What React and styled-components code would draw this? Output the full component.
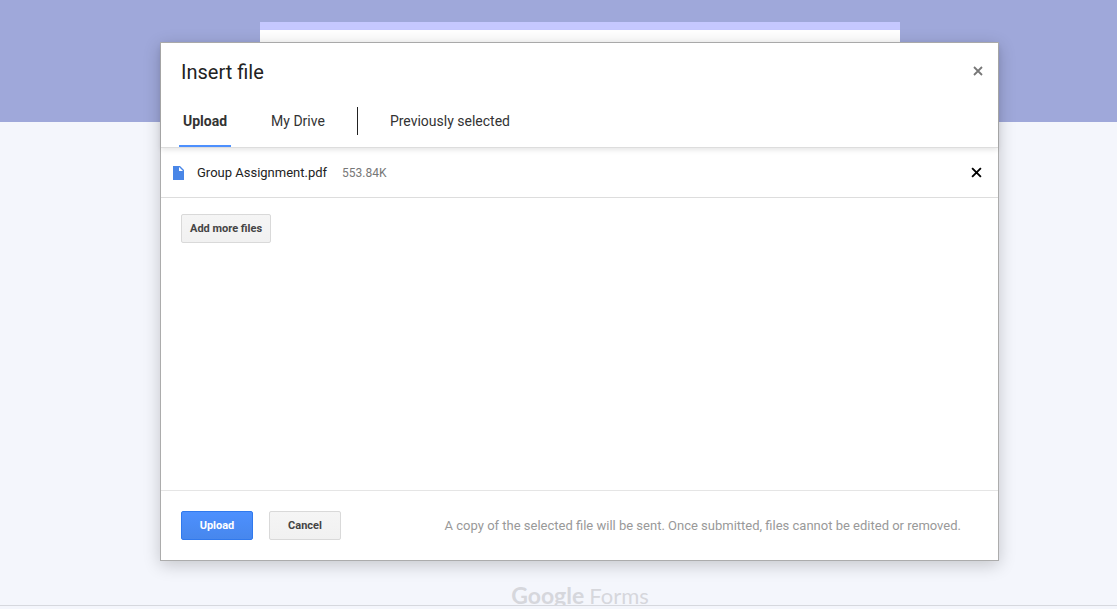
import React from "react";
import styled, { createGlobalStyle, css } from "styled-components";

const GlobalStyle = createGlobalStyle`
  *, *::before, *::after { box-sizing: border-box; }
  body {
    margin: 0;
    background: #f4f6fc;
    font-family: Roboto, "Liberation Sans", sans-serif;
    color: #222;
  }
  button { font-family: inherit; cursor: pointer; }
`;

const Page = styled.div`
  position: relative;
  display: flex;
  flex-direction: column;
  height: 100vh;
  min-height: 420px;
  padding-bottom: 3px;
`;

const Backdrop = styled.main`
  flex: 1;
  min-height: 0;
  display: flex;
  flex-direction: column;
  align-items: center;
  padding: 22px 0 0 43px;
  overflow: hidden;
  border-bottom: 1px solid #d6d8de;
  background: linear-gradient(#9fa8da 122px, #f4f6fc 122px);
`;

const FormCard = styled.div`
  flex: 1;
  width: 100%;
  max-width: 640px;
  border-top: 8px solid #c5c8ff;
  background: #fff;
  margin-bottom: 48px;
`;

const Brand = styled.div`
  display: flex;
  align-items: baseline;
  gap: 5px;
  height: 24px;
  font-family: Lato, "Liberation Sans", sans-serif;
  font-size: 22px;
  line-height: 28px;
  font-weight: 400;
  color: #d6d7dc;
`;

const BrandName = styled.span`
  font-size: 23px;
  font-weight: 700;
`;

const Overlay = styled.div`
  position: absolute;
  inset: 0;
  display: flex;
  padding: 42px 118px 48px 160px;
`;

const Dialog = styled.section`
  flex: 1;
  min-width: 0;
  display: flex;
  flex-direction: column;
  background: #fff;
  border: 1px solid #acacac;
  box-shadow: 0 4px 16px rgba(0, 0, 0, 0.2);
`;

const Header = styled.header`
  position: relative;
  border-bottom: 1px solid #ddd;
  box-shadow: 0 2px 5px rgba(0, 0, 0, 0.1);
`;

const TitleRow = styled.div`
  display: flex;
  align-items: center;
  justify-content: space-between;
  height: 58px;
  padding: 0 14px 0 20px;
`;

const Title = styled.h1`
  margin: 0;
  font-size: 20px;
  line-height: 24px;
  font-weight: 400;
`;

const IconButton = styled.button`
  display: flex;
  align-items: flex-start;
  justify-content: center;
  width: 12px;
  height: 12px;
  padding: 0;
  border: 0;
  background: transparent;
  color: ${(p) => p.$color};
`;

const Tabs = styled.nav`
  display: flex;
  height: 46px;
  padding-left: 18px;
`;

const Tab = styled.button`
  height: 46px;
  padding: 0 4px 4px;
  border: 0;
  border-bottom: 2px solid transparent;
  background: transparent;
  font-size: 14px;
  line-height: 40px;
  color: #333;
  & + & { margin-left: 36px; }
  ${(p) =>
    p.$active &&
    css`
      font-weight: 700;
      border-bottom-color: #4d90fe;
    `}
`;

const Divider = styled.span`
  width: 1px;
  height: 28px;
  margin: 6px 28px 0;
  background: #222;
`;

const FileRow = styled.div`
  display: flex;
  align-items: center;
  height: 50px;
  padding: 0 16px 0 12px;
  border-bottom: 1px solid #ddd;
  font-size: 13px;
  line-height: 16px;
`;

const FileName = styled.span`
  margin: 0 15px 0 13px;
`;

const FileSize = styled.span`
  flex: 1;
  font-size: 12px;
  color: #777;
`;

const Content = styled.div`
  flex: 1;
  padding: 16px 20px;
`;

const Button = styled.button`
  min-width: 72px;
  height: 29px;
  padding: 0 8px;
  border: 1px solid ${(p) => (p.$primary ? "#3079ed" : "#d9d9d9")};
  border-radius: 2px;
  background: ${(p) =>
    p.$primary
      ? "linear-gradient(#4d90fe, #4787ed)"
      : "linear-gradient(#f5f5f5, #f1f1f1)"};
  color: ${(p) => (p.$primary ? "#fff" : "#444")};
  font-size: 11px;
  line-height: 16px;
  font-weight: 700;
  white-space: nowrap;
`;

const Footer = styled.footer`
  display: flex;
  align-items: center;
  gap: 16px;
  height: 70px;
  padding: 0 37px 0 20px;
  border-top: 1px solid #e5e5e5;
`;

const Note = styled.p`
  margin: 0 0 0 auto;
  font-size: 13px;
  line-height: 18px;
  font-weight: 400;
  color: #999;
`;

function Cross({ size, stroke }) {
  return (
    <svg width={size} height={size} viewBox="0 0 10 10" aria-hidden="true">
      <path d="M1 1L9 9M9 1L1 9" stroke="currentColor" strokeWidth={stroke} />
    </svg>
  );
}

function FileIcon() {
  return (
    <svg width="11" height="14" viewBox="0 0 11 14" aria-hidden="true">
      <path d="M0 0H7L11 4V14H0Z" fill="#4986e7" />
      <path d="M6 1V5H10Z" fill="#fff" />
    </svg>
  );
}

export default function App() {
  return (
    <>
      <GlobalStyle />
      <Page>
        <Backdrop>
          <FormCard />
          <Brand>
            <BrandName>Google</BrandName>
            <span>Forms</span>
          </Brand>
        </Backdrop>
        <Overlay>
          <Dialog role="dialog" aria-labelledby="dialog-title">
            <Header>
              <TitleRow>
                <Title id="dialog-title">Insert file</Title>
                <IconButton type="button" aria-label="Close" $color="#777">
                  <Cross size={10} stroke={1.8} />
                </IconButton>
              </TitleRow>
              <Tabs>
                <Tab type="button" $active>Upload</Tab>
                <Tab type="button">My Drive</Tab>
                <Divider />
                <Tab type="button">Previously selected</Tab>
              </Tabs>
            </Header>
            <FileRow>
              <FileIcon />
              <FileName>Group Assignment.pdf</FileName>
              <FileSize>553.84K</FileSize>
              <IconButton type="button" aria-label="Remove file" $color="#000">
                <Cross size={11} stroke={1.7} />
              </IconButton>
            </FileRow>
            <Content>
              <Button type="button">Add more files</Button>
            </Content>
            <Footer>
              <Button type="button" $primary>Upload</Button>
              <Button type="button">Cancel</Button>
              <Note>
                A copy of the selected file will be sent. Once submitted, files
                cannot be edited or removed.
              </Note>
            </Footer>
          </Dialog>
        </Overlay>
      </Page>
    </>
  );
}
